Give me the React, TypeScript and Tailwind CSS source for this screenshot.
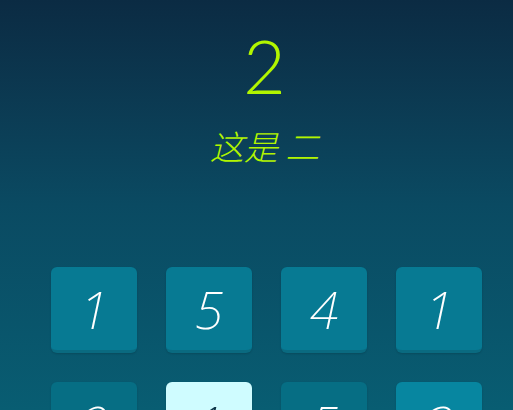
export default function App() {
  const rows = [
    [
      { n: "1", tone: "normal" },
      { n: "5", tone: "normal" },
      { n: "4", tone: "normal" },
      { n: "1", tone: "normal" },
    ],
    [
      { n: "2", tone: "dim" },
      { n: "1", tone: "active" },
      { n: "5", tone: "dim" },
      { n: "3", tone: "bright" },
    ],
  ];

  const toneClass: Record<string, string> = {
    normal: "bg-[#077a93] border-[#0a6a80] text-white",
    dim: "bg-[#066e84] border-[#0a6276] text-white",
    bright: "bg-[#0786a0] border-[#0a7188] text-white",
    active: "bg-[#cffcff] border-[#a9e6ec] text-[#0c3347]",
  };

  return (
    <div
      className="h-[410px] w-full overflow-hidden bg-gradient-to-b from-[#0b2b43] via-[#0a4a62] to-[#085d72]"
      style={{ fontFamily: "Lato, 'Open Sans', 'Noto Sans CJK SC', sans-serif" }}
    >
      <div className="flex flex-col items-center pt-[24px]">
        <div className="h-[84px] pl-[16px] text-[74px] font-light leading-[84px] text-[#b2f500]">
          2
        </div>
        <div
          className="mt-[18px] pl-[16px] text-[34px] font-light italic leading-[40px] text-[#b2f500]"
          style={{ fontFamily: "'Noto Sans CJK SC', sans-serif" }}
        >
          这是&nbsp;二
        </div>
      </div>

      <div className="mt-[101px] flex flex-col gap-[29px] pl-[51px]">
        {rows.map((row, i) => (
          <div key={i} className="flex gap-[29px]">
            {row.map((t, j) => (
              <div
                key={j}
                className={`flex h-[86px] w-[86px] items-center justify-center rounded-[6px] border-b-[3px] shadow-[0_1px_2px_rgba(0,0,0,0.15)] ${toneClass[t.tone]}`}
              >
                <span
                  className="text-[52px] font-extralight italic leading-none"
                  style={{ fontFamily: "'Noto Sans', Lato, sans-serif" }}
                >
                  {t.n}
                </span>
              </div>
            ))}
          </div>
        ))}
      </div>
    </div>
  );
}
